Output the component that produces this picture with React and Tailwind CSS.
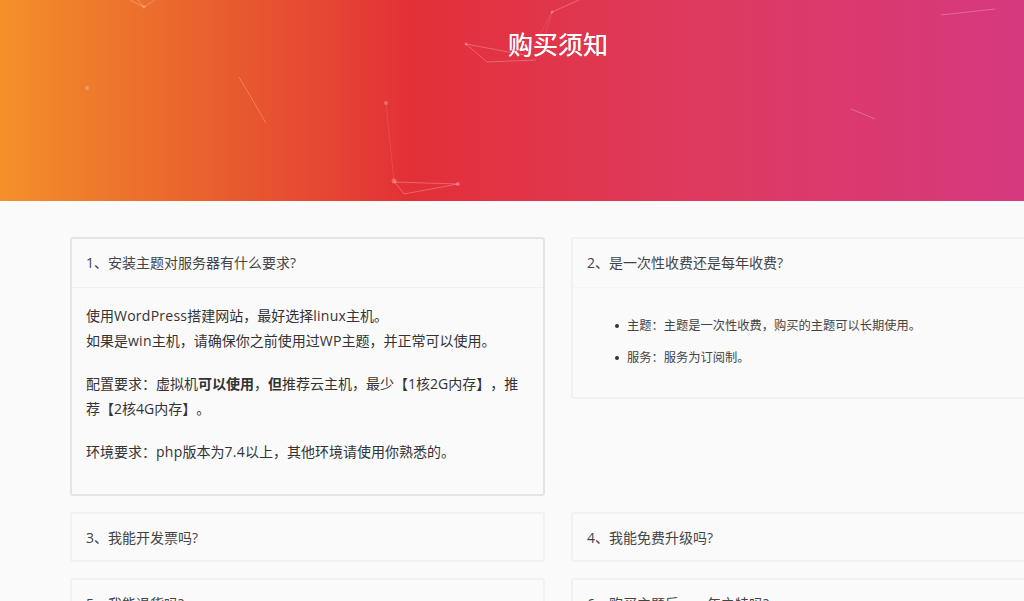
import React from 'react';

const font = "font-['Open_Sans','Noto_Sans_CJK_SC',sans-serif] [text-spacing-trim:space-all] [font-kerning:none]";

// latin words run a bit wider in the reference
const En = ({ children }) => <span className="tracking-[0.25px]">{children}</span>;

// closed question card
const Card = ({ title }) => (
  <div className="rounded-[3px] border-2 border-[#f1f1f1] bg-[#fafafb]">
    <div className="px-[14px] h-[46px] flex items-center text-[14px] text-[#444]">{title}</div>
  </div>
);

const Particles = () => (
  <svg className="absolute inset-0 h-full w-full" viewBox="0 0 1024 201" fill="none" stroke="#fff" strokeWidth="1">
    <g strokeOpacity="0.25">
      <path d="M130 0 L144 7 L155 0 M144 7 L138 0" />
      <path d="M239 77 L266 123" />
      <path d="M394 181 L404 194 L458 184 L394 182" />
      <path d="M466 44 L487 62 L536 60 M466 44 L530 56" />
      <path d="M579 0 L552 12" />
      <path d="M941 15 L995 9" />
      <path d="M851 109 L875 119" />
    </g>
    <g strokeOpacity="0.1">
      <path d="M386 103 L394 181" />
      <path d="M552 12 L545 36 M552 12 L532 50" />
    </g>
    <g fill="#fff" fillOpacity="0.25" stroke="none">
      <circle cx="87" cy="88" r="2" />
      <circle cx="144" cy="7" r="1.5" />
      <circle cx="386" cy="103" r="2" />
      <circle cx="394" cy="181" r="2.5" />
      <circle cx="458" cy="184" r="2" />
      <circle cx="552" cy="12" r="1.5" />
      <circle cx="466" cy="44" r="1.5" />
    </g>
  </svg>
);

export default function App() {
  return (
    <div className={`${font} h-[601px] overflow-hidden bg-[#fafafb]`}>
      <div className="relative h-[201px] bg-[linear-gradient(90deg,#f39129_0%,#ee782c_10%,#e95c2e_22%,#e54334_33%,#e33037_40%,#de3a5e_67%,#d6397f_100%)]">
        <Particles />
        <h1 className="relative pt-[25px] pl-[508px] text-[25px] leading-[38px] text-white [text-shadow:0_0_0.5px_#fff]">购买须知</h1>
      </div>

      <div className="grid w-[976px] grid-cols-[475px_475px] gap-x-[26px] gap-y-[16px] items-start ml-[70px] mt-[36px]">
        <div className="rounded-[3px] border-2 border-[#e4e4e4] bg-[#fafafb]">
          <div className="px-[14px] pb-[2px] h-[49px] flex items-center text-[14px] text-[#444] border-b border-[#f1f1f1]">1、安装主题对服务器有什么要求?</div>
          <div className="px-[14px] pt-[15px] pb-[30px] text-[14px] leading-[25px] text-[#333]">
            <p>使用<En>WordPress</En>搭建网站，最好选择<En>linux</En>主机。<br />如果是<En>win</En>主机，请确保你之前使用过<En>WP</En>主题，并正常可以使用。</p>
            <p className="mt-[18px]">配置要求：虚拟机<strong>可以使用</strong>，<strong>但</strong>推荐云主机，最少【1核2G内存】，推荐【2核4G内存】。</p>
            <p className="mt-[18px]">环境要求：<En>php</En>版本为<En>7.4</En>以上，其他环境请使用你熟悉的。</p>
          </div>
        </div>

        <div className="rounded-[3px] border-2 border-[#f1f1f1] bg-[#fafafb]">
          <div className="px-[14px] pb-[2px] h-[49px] flex items-center text-[14px] text-[#444] border-b border-[#f4f4f4]">2、是一次性收费还是每年收费?</div>
          <ul className="pl-[42px] pt-[28px] pb-[29px] text-[12.25px] leading-[20px] text-[#444] space-y-[12px]">
            <li className="flex items-center gap-[8px]"><span className="size-[4px] rounded-full bg-[#333]" />主题：主题是一次性收费，购买的主题可以长期使用。</li>
            <li className="flex items-center gap-[8px]"><span className="size-[4px] rounded-full bg-[#333]" />服务：服务为订阅制。</li>
          </ul>
        </div>

        <Card title="3、我能开发票吗?" />
        <Card title="4、我能免费升级吗?" />
        <Card title="5、我能退货吗?" />
        <Card title="6、购买主题后，一年之特吗?" />
      </div>
    </div>
  );
}
